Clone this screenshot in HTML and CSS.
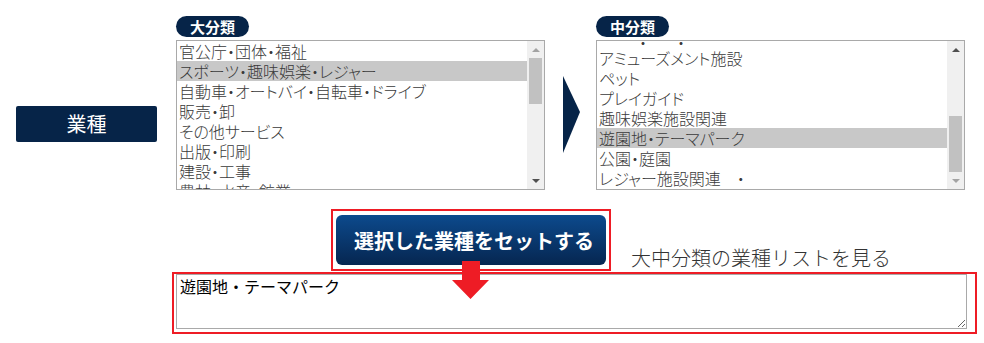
FILE: index.html
```html
<!DOCTYPE html>
<html lang="ja">
<head>
    <meta charset="UTF-8">
    <meta name="viewport" content="width=device-width, initial-scale=1.0">
    <title>業種選択</title>
    <link rel="stylesheet" href="styles.css">
</head>
<body>
    <div class="page">
        <div class="select-row">
            <div class="field-label">業種</div>

            <div class="category">
                <div class="pill">大分類</div>
                <div class="listbox">
                    <div class="items">
                        <div class="item">官公庁・団体・福祉</div>
                        <div class="item selected">スポーツ・趣味娯楽・レジャー</div>
                        <div class="item">自動車・オートバイ・自転車・ドライブ</div>
                        <div class="item">販売・卸</div>
                        <div class="item">その他サービス</div>
                        <div class="item">出版・印刷</div>
                        <div class="item">建設・工事</div>
                        <div class="item">農林・水産・鉱業</div>
                    </div>
                    <div class="scrollbar">
                        <div class="scroll-btn up light"></div>
                        <div class="track"><div class="thumb thumb-top"></div></div>
                        <div class="scroll-btn down"></div>
                    </div>
                </div>
            </div>

            <div class="next-arrow">
                <svg width="17" height="78" viewBox="0 0 17 78"><polygon points="0,0 17,36 0,77" fill="#062448"/></svg>
            </div>

            <div class="category">
                <div class="pill">中分類</div>
                <div class="listbox">
                    <div class="items">
                        <div class="item partial"><span class="dot">・</span><span class="dot">・</span></div>
                        <div class="item">アミューズメント施設</div>
                        <div class="item">ペット</div>
                        <div class="item">プレイガイド</div>
                        <div class="item">趣味娯楽施設関連</div>
                        <div class="item selected">遊園地・テーマパーク</div>
                        <div class="item">公園・庭園</div>
                        <div class="item">レジャー施設関連　・</div>
                    </div>
                    <div class="scrollbar">
                        <div class="scroll-btn up"></div>
                        <div class="track"><div class="thumb thumb-low"></div></div>
                        <div class="scroll-btn down light"></div>
                    </div>
                </div>
            </div>
        </div>

        <div class="action-row">
            <div class="set-outline">
                <button type="button" class="set-button">選択した業種をセットする</button>
            </div>
            <a class="list-link" href="#">大中分類の業種リストを見る</a>
        </div>

        <div class="result-outline">
            <textarea class="result" rows="3">遊園地・テーマパーク</textarea>
        </div>

        <svg class="down-arrow" width="37" height="38" viewBox="0 0 37 38"><polygon points="10,0 28,0 28,19 37,19 18.5,38 0,19 10,19" fill="#ee1c25"/></svg>
    </div>
</body>
</html>
```

FILE: styles.css
```css
body {
    margin: 0;
    background: #fff;
    font-family: "Noto Sans CJK JP", "Noto Sans", sans-serif;
    color: #444;
}
.page {
    position: relative; /* for the red arrow overlay */
    padding-top: 16px;
}
.select-row {
    display: flex;
    align-items: flex-start;
    padding-left: 16px;
}
.field-label {
    width: 141px;
    height: 36px;
    margin-top: 90px;
    margin-right: 19px;
    background: #062448;
    border-radius: 2px;
    color: #fff;
    font-size: 20px;
    line-height: 36px;
    text-align: center;
}
.category {
    width: 369px;
}
.pill {
    width: 73px;
    height: 21px;
    margin-bottom: 3px;
    background: #062448;
    border-radius: 11px;
    color: #fff;
    font-size: 15px;
    font-weight: bold;
    line-height: 21px;
    text-align: center;
}
.listbox {
    display: flex;
    height: 148px;
    border: 1px solid #a9a9a9;
    background: #fff;
}
.items {
    flex: 1;
    overflow: hidden;
}
.item {
    height: 20px;
    padding-left: 2px;
    font-size: 16px;
    font-weight: 300;
    line-height: 20px;
    white-space: nowrap;
    font-feature-settings: "palt";
    color: #3a3a3a;
}
.item.selected {
    background: #c8c8c8;
}
/* row scrolled mostly out of view */
.item.partial {
    height: 7px;
    line-height: 2px;
    overflow: hidden;
}
.item.partial .dot {
    margin-left: 40px;
}
.item.partial .dot + .dot {
    margin-left: 30px;
}
.scrollbar {
    width: 17px;
    display: flex;
    flex-direction: column;
    background: #f0f0f0;
}
.scroll-btn {
    height: 17px;
    display: flex;
    align-items: center;
    justify-content: center;
}
.scroll-btn::before {
    content: "";
    border-left: 4px solid transparent;
    border-right: 4px solid transparent;
}
.scroll-btn.up::before {
    border-bottom: 4px solid #505050;
}
.scroll-btn.down::before {
    border-top: 4px solid #505050;
}
.scroll-btn.up.light::before {
    border-bottom-color: #a3a3a3;
}
.scroll-btn.down.light::before {
    border-top-color: #a3a3a3;
}
.track {
    flex: 1;
}
.thumb {
    width: 13px;
    margin-left: 2px;
    background: #c1c1c1;
}
.thumb-top {
    height: 46px;
}
.thumb-low {
    height: 56px;
    margin-top: 58px;
}
.next-arrow {
    margin: 60px 16px 0 18px;
    line-height: 0;
}
.action-row {
    display: flex;
    align-items: flex-end;
    margin-top: 19px;
    padding-left: 331px;
}
.set-outline {
    border: 2px solid #ee1c25;
    padding: 4px 3px;
    line-height: 0;
}
.set-button {
    width: 270px;
    height: 50px;
    padding: 0 0 0 6px;
    border: none;
    border-radius: 6px;
    background: linear-gradient(#0c4a8d, #062650);
    color: #fff;
    font-family: "Noto Sans CJK JP", sans-serif;
    font-size: 20px;
    font-weight: bold;
    cursor: pointer;
}
.list-link {
    margin-left: 20px;
    color: #333;
    font-size: 20px;
    font-weight: 300;
    line-height: 26px;
    text-decoration: none;
}
.result-outline {
    width: 796px;
    margin: 1px 0 0 172px;
    border: 2px solid #ee1c25;
    padding: 0 3px 3px 2px;
    line-height: 0;
}
.result {
    display: block;
    width: 791px;
    height: 55px;
    box-sizing: border-box;
    margin: 0;
    padding: 1px 3px;
    border: 1px solid #a9a9a9;
    font-family: "Noto Sans CJK JP", sans-serif;
    font-size: 16px;
    line-height: 20px;
    color: #000;
}
.down-arrow {
    position: absolute;
    left: 452px;
    top: 261px;
}
```
